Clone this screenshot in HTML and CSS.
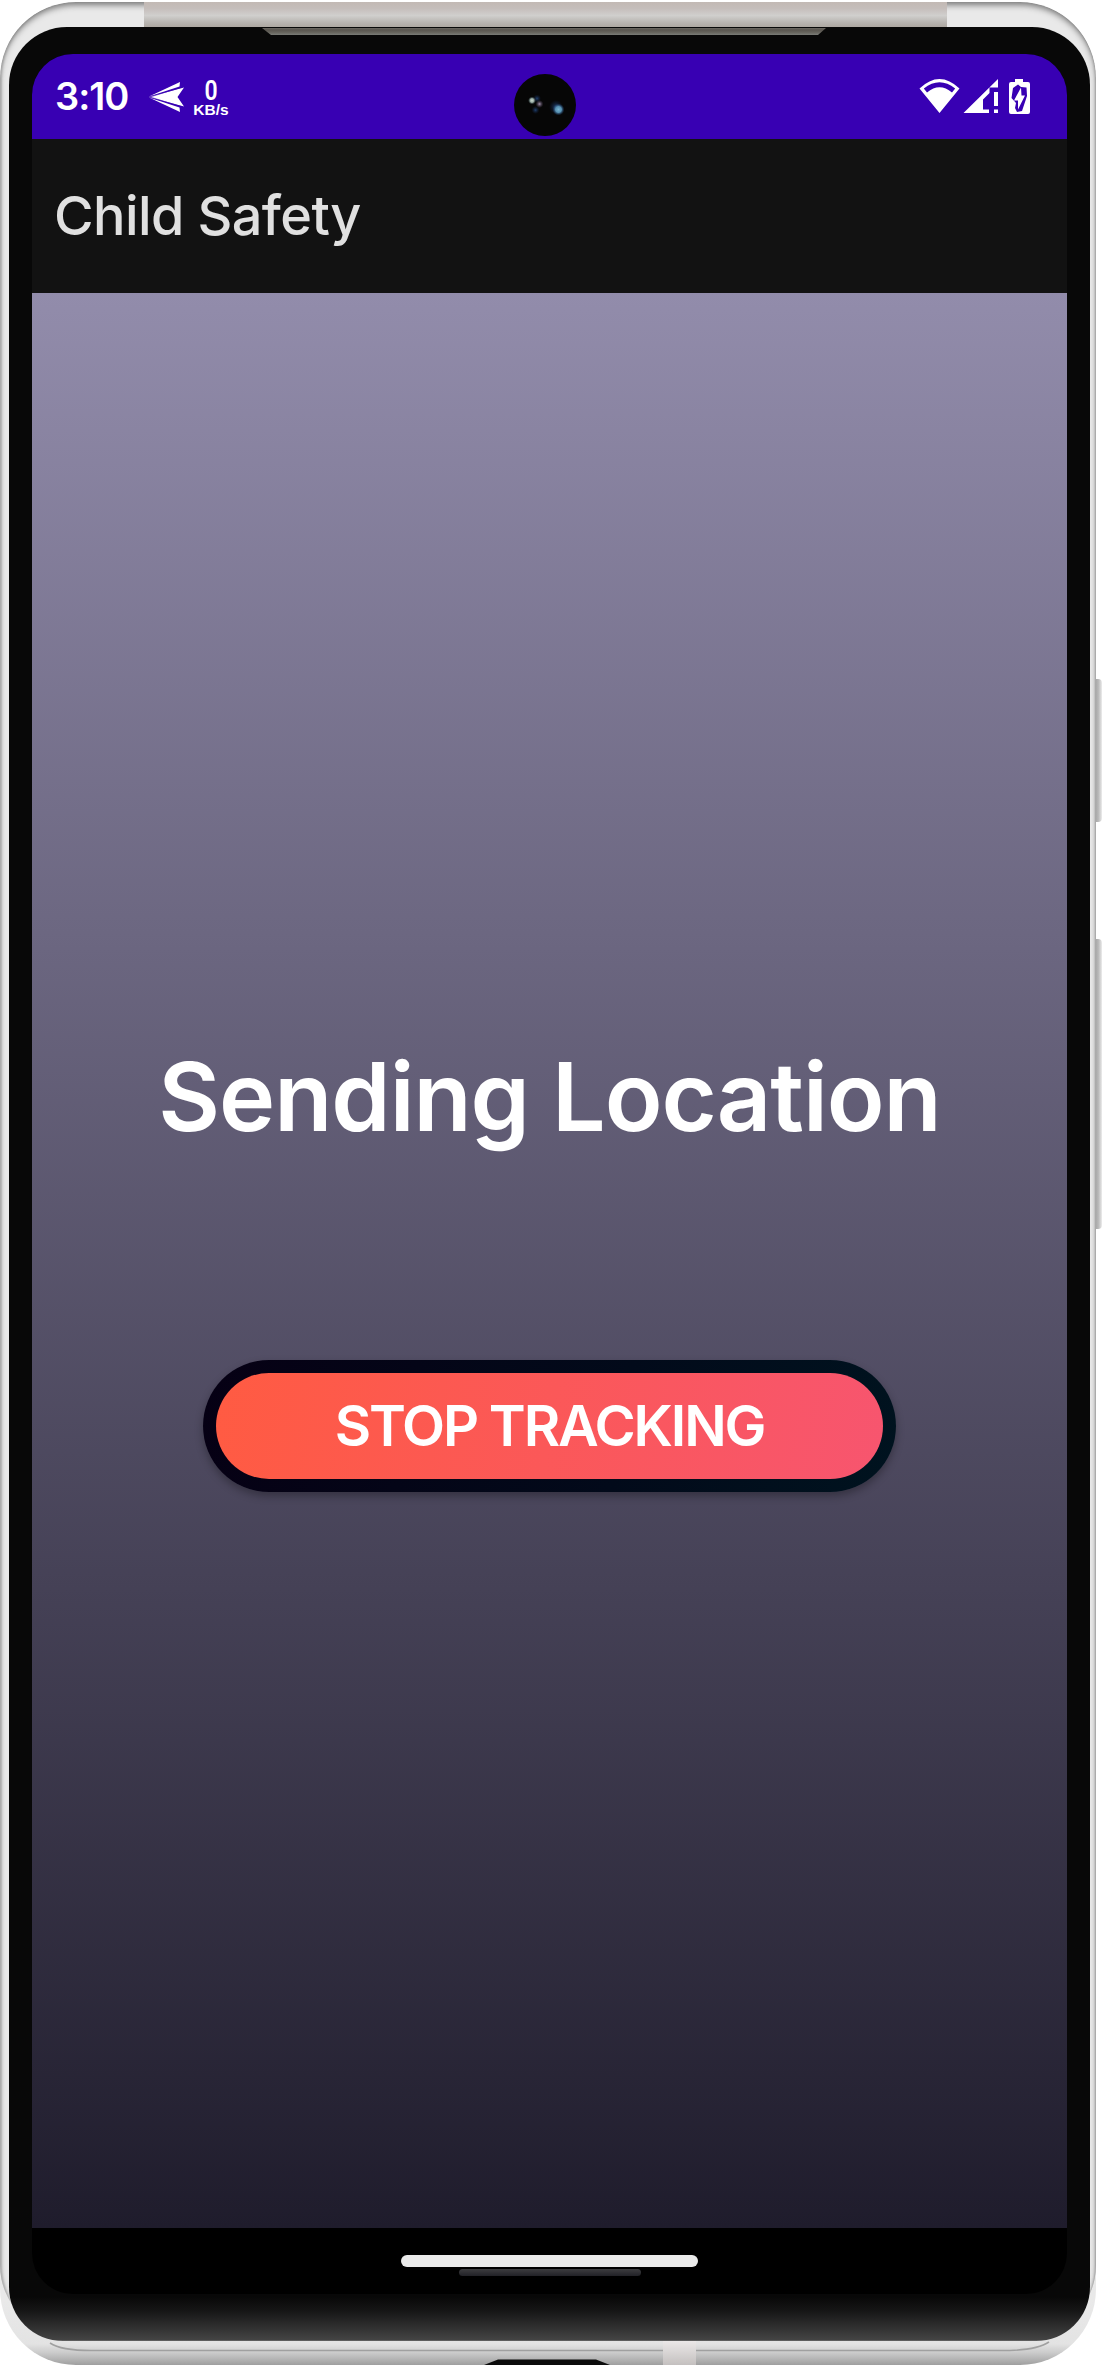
FILE: index.html
```
<!DOCTYPE html>
<html lang="en">
<head>
<meta charset="utf-8">
<title>Child Safety</title>
<link rel="stylesheet" href="styles.css">
</head>
<body>
<div class="device">
  <div class="frame">
    <div class="frame-top"><div class="antenna"></div></div>
    <div class="bezel">
      <div class="speaker"></div>
      <div class="screen">
        <header class="status-bar">
          <span class="clock">3:10</span>
          <svg class="send-icon" width="36" height="30" viewBox="0 0 36 30" fill="#fff">
            <path d="M0 15 35 5.500 28.500 15 35 24.500Z"/>
            <path d="M0 14.500 31 0 30.500 4.400Z"/>
            <path d="M0 15.500 30.500 25.600 31 30Z"/>
            <path d="M1 15 34 4.800M1 15 34 25.200" stroke="#3800b3" stroke-width=".6"/>
          </svg>
          <div class="net-speed"><span class="speed">0</span><span class="unit">KB/s</span></div>
          <svg class="camera" width="62" height="62" viewBox="0 0 62 62">
            <defs>
              <radialGradient id="blueGlint"><stop offset="0" stop-color="#79b4d2"/><stop offset=".5" stop-color="#558fb0"/><stop offset="1" stop-color="#1b3c70" stop-opacity="0"/></radialGradient>
              <radialGradient id="paleGlint"><stop offset="0" stop-color="#cfdcd4"/><stop offset=".5" stop-color="#91a59d"/><stop offset="1" stop-color="#32444c" stop-opacity="0"/></radialGradient>
              <radialGradient id="mauveGlint"><stop offset="0" stop-color="#a695b0"/><stop offset="1" stop-color="#4c4058" stop-opacity="0"/></radialGradient>
              <radialGradient id="deepGlint"><stop offset="0" stop-color="#20406e"/><stop offset="1" stop-color="#102040" stop-opacity="0"/></radialGradient>
            </defs>
            <circle cx="31" cy="31" r="31" fill="#060606"/>
            <circle cx="42" cy="33" r="7" fill="url(#deepGlint)"/>
            <circle cx="44.500" cy="35.500" r="6" fill="url(#blueGlint)"/>
            <circle cx="23" cy="24.500" r="4" fill="url(#deepGlint)"/>
            <circle cx="21.500" cy="36" r="4" fill="url(#deepGlint)"/>
            <circle cx="18" cy="26.500" r="4" fill="url(#paleGlint)"/>
            <circle cx="25.500" cy="30" r="4" fill="url(#mauveGlint)"/>
          </svg>
          <svg class="system-icons" width="112" height="38" viewBox="0 0 112 38" fill="#fff">
            <path fill-rule="evenodd" d="M.5 9.500Q20.500-9.500 40.500 9.500L20.500 34Z M4.800 9.600 8 13.500Q20.500 3 33 13.500L36.200 9.600Q20.500-3 4.800 9.600Z"/>
            <path fill-rule="evenodd" d="M44.500 34 79 0V8.500H70.500V14L64 20.500V30.500H70V34Z"/>
            <path d="M75 13H79V27H75ZM75 30.500H79V34H75Z"/>
            <path fill-rule="evenodd" d="M96 0H104V3H109Q111 3 111 5V33Q111 35 109 35H92Q90 35 90 33V5Q90 3 92 3H96ZM99 5.500 102 8 107.500 8.500 108 17 103 32 98 33 96 29 97 24 92.500 19 94 9Z"/>
            <path d="M102 8.500 102.500 16.500H106L99 30.500V21.500H95Z"/>
          </svg>
        </header>
        <div class="app-bar"><h1 class="app-title">Child Safety</h1></div>
        <main class="content">
          <p class="status-text">Sending Location</p>
          <button class="stop-button" type="button"><span class="stop-fill"><span class="stop-label">STOP TRACKING</span></span></button>
        </main>
        <nav class="nav-bar">
          <div class="home-handle"></div>
          <div class="handle-glint"></div>
        </nav>
      </div>
    </div>
    <svg class="frame-bottom" width="1096" height="24" viewBox="0 0 1096 24">
      <defs><linearGradient id="band" x2="0" y2="1"><stop stop-color="#ebe8e8"/><stop offset="1" stop-color="#c4c0bf"/></linearGradient></defs>
      <path d="M50 2Q61 9.500 91 9.500H1010Q1038 8.500 1049 1" fill="none" stroke="#a0a0a0" stroke-width="1.600"/>
      <rect x="663" width="33" height="24" fill="url(#band)"/>
      <path d="M484 24 498 18.500H596L610 24Z" fill="#0b0b0b"/>
    </svg>
  </div>
  <div class="side-keys">
    <div class="power-key"></div>
    <div class="volume-key"></div>
  </div>
</div>
</body>
</html>
```
FILE: styles.css
```
* { box-sizing: border-box; }
body { margin: 0; background: #fff; font-family: Inter, "Liberation Sans", sans-serif; }
.device { display: flex; width: 1103px; height: 2365px; padding-top: 2px; overflow: hidden; }
.frame {
  position: relative;
  display: flex; flex-direction: column;
  width: 1096px; height: 2363px;
  overflow: hidden;
  border-radius: 76px;
  background: linear-gradient(#e9e9e9 0, #e9e9e9 2300px, #e3e3e3 2342px, #cacaca 2351px, #9f9f9f 2363px);
}
.frame::before {
  content: ""; position: absolute; inset: 0 0 30px;
  border-radius: 76px 76px 70px 70px;
  box-shadow: inset 0 4px 6px -1px #777, inset 3px 0 2px -1px #c4c4c4, inset -2px 0 2px -1px #b8b8b8;
}
.frame-top { position: relative; flex: none; height: 25px; padding-left: 144px; }
.antenna { width: 803px; height: 26px; background: linear-gradient(#c2b9b4, #c5bebb 25%, #d0cfcd 52%, #b7b3af 80%, #aba59e); }
.bezel {
  position: relative;
  flex: none; width: 1081px; height: 2314px; margin-left: 9px;
  padding: 0 23px;
  border-radius: 58px 58px 54px 54px;
  background: linear-gradient(#080808 0, #080808 2270px, #161616 2284px, #444 2313px, #777 2314px);
}
.speaker {
  height: 8px; width: 564px; margin-left: 230px;
  background: linear-gradient(#77736c, #59554f 35%, #65635c 65%, #7a7c77);
  clip-path: polygon(0 1px, 100% 1px, 556px 100%, 9px 100%);
}
.screen {
  display: flex; flex-direction: column;
  width: 1035px; height: 2240px; margin-top: 19px;
  border-radius: 41px; overflow: hidden; background: #000;
}
.status-bar {
  position: relative; flex: none; display: flex; align-items: flex-start;
  height: 85px; padding: 24px 36px 0 23px;
  background: #3800b3; color: #fff;
}
.clock { width: 73px; font-size: 38px; font-weight: 600; line-height: 37px; letter-spacing: -1px; white-space: nowrap; }
.send-icon { margin: 4px 0 0 21px; }
.net-speed { display: flex; flex-direction: column; align-items: center; width: 38px; margin-left: 7px; }
.speed { font: 600 28px/25px Roboto, sans-serif; transform: scaleX(.82); }
.unit { font: bold 15.5px/14px "Liberation Sans", sans-serif; }
.camera { position: absolute; left: 482px; top: 20px; }
.system-icons { margin-left: auto; margin-top: 1px; }
.app-bar { flex: none; display: flex; align-items: center; height: 154px; padding-left: 22px; background: #121212; }
.app-title { margin: 0; color: #e0e0e0; font-size: 54px; font-weight: 500; line-height: 66px; letter-spacing: -.6px; white-space: nowrap; }
.content {
  flex: none; display: flex; flex-direction: column; align-items: center; height: 1935px;
  padding-top: 746px;
  background: linear-gradient(#928cab, #1f1c2c);
}
.status-text { margin: 0; color: #fff; font-size: 95px; font-weight: 600; line-height: 116px; letter-spacing: -1px; white-space: nowrap; }
.stop-button {
  width: 693px; height: 132px; margin-top: 205px; padding: 13px;
  border: 0; border-radius: 66px;
  background: linear-gradient(100deg, #060014, #020a1a 60%, #00131f);
  box-shadow: 0 4px 8px rgba(0,0,0,.3);
}
.stop-fill {
  display: flex; align-items: center; justify-content: center; height: 106px; border-radius: 53px;
  background: linear-gradient(100deg, #ff5b42, #f7556f);
}
.stop-label { color: #fff; font: 600 56px/66px Inter, sans-serif; letter-spacing: -2.15px; white-space: nowrap; }
.nav-bar { display: flex; flex-direction: column; align-items: center; height: 66px; padding-top: 27px; }
.home-handle { width: 297px; height: 12px; border-radius: 6px; background: #ebebeb; }
.handle-glint { width: 182px; height: 7px; margin-top: 2px; border-radius: 3.500px; background: linear-gradient(#3c3c3f, #222227); }
.frame-bottom { display: block; flex: none; position: relative; }
.side-keys { display: flex; flex-direction: column; width: 6px; padding-top: 677px; }
.power-key, .volume-key { height: 143px; border-radius: 0 4px 4px 0; background: linear-gradient(90deg, #a9a9a9, #bcbcbc 45%, #ededed); }
.volume-key { height: 290px; margin-top: 117px; }
```
